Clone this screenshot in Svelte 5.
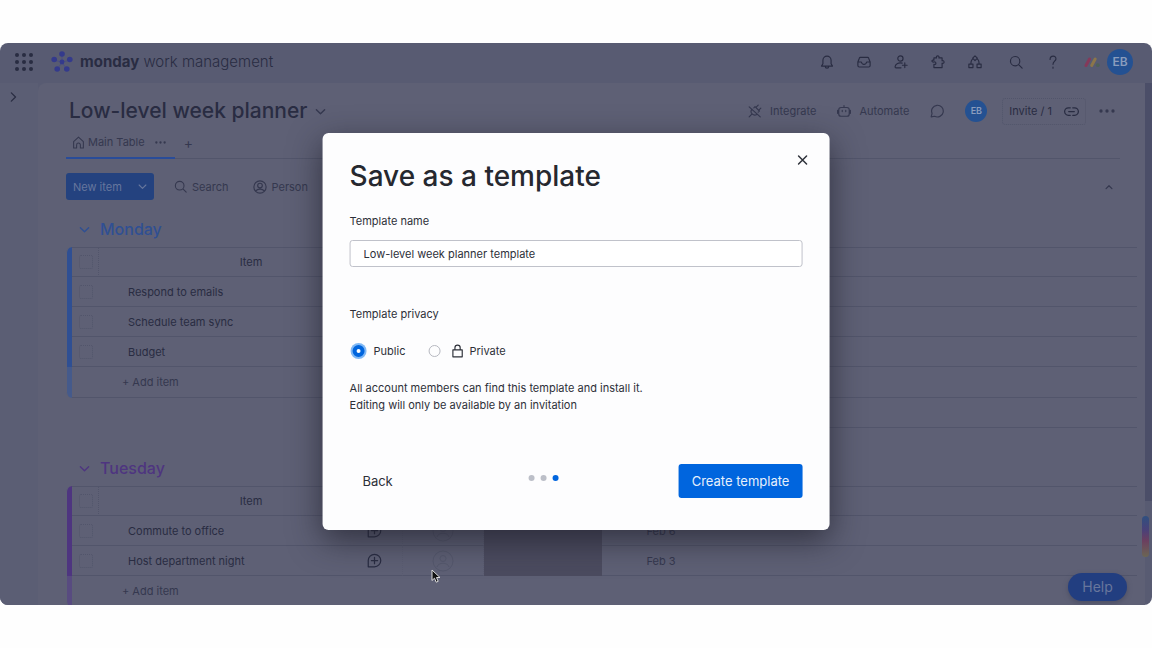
<script lang="ts">
	interface Row {
		name: string;
		date?: string;
	}
	interface Group {
		id: string;
		title: string;
		rows: Row[];
	}

	const groups: Group[] = [
		{
			id: 'monday',
			title: 'Monday',
			rows: [{ name: 'Respond to emails' }, { name: 'Schedule team sync' }, { name: 'Budget' }]
		},
		{
			id: 'tuesday',
			title: 'Tuesday',
			rows: [
				{ name: 'Commute to office', date: 'Feb 6' },
				{ name: 'Host department night', date: 'Feb 3' }
			]
		}
	];

	// 24x24 stroke icons
	const icons: Record<string, string> = {
		bell: 'M12 2a7 7 0 0 0-7 7v6l-2.500 4h19L19 15V9a7 7 0 0 0-7-7zM9 19.500a3 3 0 0 0 6 0',
		inbox:
			'M6 4h12a2 2 0 0 1 2 1.500L22.500 12v6a2.500 2.500 0 0 1-2.500 2.500H4A2.500 2.500 0 0 1 1.500 18v-6L4 5.500A2 2 0 0 1 6 4zM2 12h5.500c.5 2.500 2 4 4.500 4s4-1.500 4.500-4H22',
		invite:
			'M11 1.500a4.500 4.500 0 1 0 0 9 4.500 4.500 0 0 0 0-9zM14 14c-6-1.500-11 1-12 5.500-.3 1.500.3 2.500 1.500 2.500H12M18.500 13.500v8M14.500 17.500h8',
		puzzle:
			'M5 5h4.500C7.500.5 15.500.5 13.500 5H19v5c4.500-2 4.500 6 0 4v7.500H5v-5.500c4.500 2 4.500-5.500 0-4-4.500 1-4.500-4.500 0-3z',
		workflow:
			'M12 1.500l4 4-4 4-4-4zM1.500 15.500h7v6h-7zM15.500 15.500h7v6h-7zM9 6.500c-3 1-4 4-4 9M15 6.500c3 1 4 4 4 9',
		search: 'M10.500 2.500a8 8 0 1 0 0 16 8 8 0 0 0 0-16zM16.500 16.500l6 6',
		help: 'M7 7.500c0-7.500 11-7 10-.5-.6 3.500-5 4-5 9M12 20.500v2',
		chevron: 'M3 8l9 9 9-9',
		chevronUp: 'M5 16l7-7 7 7',
		chevronRight: 'M8 2l10 10L8 22',
		home: 'M3 10.500L12 2l9 8.500V22h-5.500v-5.500a3.500 3.500 0 0 0-7 0V22H3z',
		person:
			'M12 1.500a10.500 10.500 0 1 0 0 21 10.500 10.500 0 0 0 0-21zM12 5.500a4 4 0 1 0 0 8 4 4 0 0 0 0-8zM5 19c2-4.500 12-4.500 14 0',
		plug: 'M7 9c-3 3-2 6 0 8s5 3 8 1M10 6.500l2-2 7.500 7.500-2 2M14.500 5l3-3M19 10l3-3M7 17l-5 5M2 5l19 17',
		robot:
			'M7 6h10a4 4 0 0 1 4 4v7a4 4 0 0 1-4 4H7a4 4 0 0 1-4-4v-7a4 4 0 0 1 4-4zM12 6V2.500M1 11v5M23 11v5M9 11v2M15 11v2',
		chat: 'M2 22l1.500-6A10 10 0 1 1 8 21z',
		chatPlus: 'M2 22V12a10 10 0 1 1 10 10zM12 7v10M7 12h10',
		link: 'M10 6H7a6 6 0 0 0 0 12h3M14 6h3a6 6 0 0 1 0 12h-3M7.500 12h9',
		close: 'M4 4l16 16M20 4L4 20',
		lock: 'M4 10h16v12H4zM7.500 10V6.500a4.500 4.500 0 0 1 9 0V10'
	};

	const barIcons = [
		{ icon: 'bell', label: 'Notifications' },
		{ icon: 'inbox', label: 'Inbox' },
		{ icon: 'invite', label: 'Invite members' },
		{ icon: 'puzzle', label: 'Apps' },
		{ icon: 'workflow', label: 'Workflows' }
	];

	let templateName = $state('Low-level week planner template');
	let privacy = $state('public');
	const steps = 3;
	const currentStep = 2;
</script>

{#snippet icon(name: string, size = 14)}
	<svg
		class="icon"
		class:small={size < 13}
		width={size}
		height={size}
		viewBox="0 0 24 24"
		aria-hidden="true"
	>
		<path d={icons[name]} />
	</svg>
{/snippet}

{#snippet dots(size = 14)}
	<svg class="dots" width={size} height={size} viewBox="0 0 24 24" aria-hidden="true">
		<circle cx="3" cy="12" r="2.500" />
		<circle cx="12" cy="12" r="2.500" />
		<circle cx="21" cy="12" r="2.500" />
	</svg>
{/snippet}

<div class="page">
	<div class="window">
		<header class="topbar">
			<button class="bare apps" aria-label="Switch product">
				<svg width="18" height="18" viewBox="0 0 18 18" aria-hidden="true">
					{#each [2, 9, 16] as cy (cy)}
						{#each [2, 9, 16] as cx (cx)}
							<circle {cx} {cy} r="2" />
						{/each}
					{/each}
				</svg>
			</button>
			<a class="brand" href="/">
				<svg width="22" height="22" viewBox="0 0 22 22" aria-hidden="true">
					<path d="M11 3v8M2 9l9 2M20 9l-9 2M6 19l5-8M16 19l-5-8" />
					<circle cx="11" cy="3" r="2.800" />
					<circle cx="3.200" cy="8.500" r="2.800" />
					<circle cx="18.800" cy="8.500" r="2.800" />
					<circle cx="6.200" cy="18" r="2.800" />
					<circle cx="15.800" cy="18" r="2.800" />
					<circle cx="11" cy="11" r="2.400" />
				</svg>
				<span><b>monday</b> work management</span>
			</a>
			<nav class="bar-icons">
				{#each barIcons as item (item.icon)}
					<button class="bare" aria-label={item.label}>{@render icon(item.icon)}</button>
				{/each}
				<button class="bare wide" aria-label="Search everything">{@render icon('search')}</button>
				<button class="bare" aria-label="Help center">{@render icon('help')}</button>
			</nav>
			<svg class="logo" width="16" height="12" viewBox="0 0 16 12" aria-hidden="true">
				<path class="red" d="M2 9.500l3.500-6.500" />
				<path class="yellow" d="M7.700 9.500l3.500-6.500" />
				<circle cx="13.800" cy="9.200" r="1.900" />
			</svg>
			<span class="avatar large">EB</span>
		</header>

		<div class="body">
			<aside class="rail">
				<button class="bare" aria-label="Open navigation">{@render icon('chevronRight', 10)}</button>
			</aside>

			<main class="board">
				<div class="title-row">
					<h1>Low-level week planner</h1>
					<button class="bare" aria-label="Board details">{@render icon('chevron', 11)}</button>
					<div class="board-actions">
						<button class="bare">{@render icon('plug')} Integrate</button>
						<button class="bare">{@render icon('robot')} Automate</button>
						<button class="bare" aria-label="Board discussion">{@render icon('chat')}</button>
						<span class="avatar">EB</span>
						<button class="bare invite">Invite / 1 {@render icon('link', 15)}</button>
						<button class="bare" aria-label="More options">{@render dots(16)}</button>
					</div>
				</div>

				<div class="tabs">
					<div class="tab">
						<a href="#main">{@render icon('home', 13)} Main Table</a>
						<button class="bare" aria-label="View options">{@render dots(11)}</button>
					</div>
					<button class="bare add-tab" aria-label="Add view">+</button>
				</div>

				<div class="toolbar">
					<button class="new-item">New item {@render icon('chevron', 9)}</button>
					<button class="bare search">{@render icon('search', 13)} Search</button>
					<button class="bare">{@render icon('person')} Person</button>
					<button class="bare collapse" aria-label="Collapse header">{@render icon('chevronUp', 10)}</button>
				</div>

				{#each groups as group (group.id)}
					<section class="group {group.id}">
						<h2>
							<button class="bare" aria-label="Collapse group">{@render icon('chevron', 11)}</button>
							{group.title}
						</h2>
						<table>
							<colgroup>
								<col class="c-bar" />
								<col class="c-check" />
								<col class="c-item" />
								<col class="c-update" />
								<col class="c-person" />
								<col class="c-status" />
								<col class="c-date" />
								<col />
							</colgroup>
							<thead>
								<tr>
									<td class="bar"></td>
									<td class="check"><input type="checkbox" aria-label="Select all" /></td>
									<th colspan="2">Item</th>
									<td></td>
									<td></td>
									<td></td>
									<td></td>
								</tr>
							</thead>
							<tbody>
								{#each group.rows as row (row.name)}
									<tr>
										<td class="bar"></td>
										<td class="check"><input type="checkbox" aria-label={row.name} /></td>
										<td class="name">{row.name}</td>
										<td class="update">{@render icon('chatPlus', 15)}</td>
										<td class="who">
											<svg class="ghost" width="22" height="22" viewBox="0 0 22 22" aria-hidden="true">
												<circle cx="11" cy="11" r="10" />
												<circle cx="11" cy="8.500" r="3" />
												<path d="M5 17c1-5 11-5 12 0" />
											</svg>
										</td>
										<td class="status"></td>
										<td class="date">{row.date ?? ''}</td>
										<td></td>
									</tr>
								{/each}
								<tr class="add">
									<td class="bar"></td>
									<td class="check"></td>
									<td colspan="6">+ Add item</td>
								</tr>
							</tbody>
						</table>
						<div class="summary"></div>
					</section>
				{/each}
			</main>
			<div class="scrollbar"></div>
		</div>

		<div class="side-tab"></div>
		<button class="help">Help</button>

		<div class="modal" role="dialog" aria-labelledby="modal-title">
			<button class="bare close" aria-label="Close">{@render icon('close', 12)}</button>
			<h2 id="modal-title">Save as a template</h2>
			<label class="field" for="template-name">Template name</label>
			<input id="template-name" class="text" type="text" bind:value={templateName} />
			<div class="field privacy" id="privacy-label">Template privacy</div>
			<div class="radios" role="radiogroup" aria-labelledby="privacy-label">
				<label>
					<input type="radio" name="privacy" value="public" bind:group={privacy} />
					Public
				</label>
				<label>
					<input type="radio" name="privacy" value="private" bind:group={privacy} />
					{@render icon('lock', 14)}
					Private
				</label>
			</div>
			<p>
				All account members can find this template and install it.<br />
				Editing will only be available by an invitation
			</p>
			<footer>
				<button class="bare back">Back</button>
				<div class="steps">
					{#each { length: steps } as _, i (i)}
						<span class:active={i === currentStep}></span>
					{/each}
				</div>
				<button class="create">Create template</button>
			</footer>
		</div>

		<svg class="cursor" width="10" height="14" viewBox="0 0 10 14" aria-hidden="true">
			<path d="M1 1v10.500l2.500-2.300 1.700 4 2-.9-1.700-3.800H9z" />
		</svg>
	</div>
</div>

<style>
	:global(body) {
		background: #fefefe;
	}
	.page {
		--ink: #292c42;
		--muted: #35384f;
		--line: #52556b;
		--surface: #5e6075;
		box-sizing: border-box;
		display: flex;
		height: 100vh;
		padding: 43px 0;
		font-family: Inter, 'Liberation Sans', sans-serif;
		font-size: 11px;
		line-height: 16px;
		color: var(--ink);
	}
	.page :where(*) {
		box-sizing: border-box;
	}
	.window {
		position: relative;
		display: flex;
		flex: 1;
		flex-direction: column;
		min-width: 0;
		overflow: hidden;
		border-radius: 8px;
		background: #585b72;
	}
	button,
	input {
		margin: 0;
		font: inherit;
	}
	button {
		cursor: pointer;
	}
	.bare {
		display: inline-flex;
		align-items: center;
		justify-content: center;
		padding: 0;
		border: 0;
		background: none;
		color: inherit;
		white-space: nowrap;
	}
	.icon {
		flex: none;
		fill: none;
		stroke: currentColor;
		stroke-width: 2;
		stroke-linecap: round;
		stroke-linejoin: round;
	}
	.icon.small {
		stroke-width: 3;
	}
	.dots {
		flex: none;
		fill: currentColor;
	}
	h1,
	h2,
	p {
		margin: 0;
		font-weight: 500;
	}

	/* top bar */
	.topbar {
		display: flex;
		flex: none;
		align-items: center;
		height: 40px;
		padding: 0 19px 2px 15px;
	}
	.apps svg {
		fill: var(--ink);
	}
	.brand {
		display: flex;
		align-items: center;
		gap: 7px;
		margin-left: 18px;
		font-size: 15px;
		color: var(--ink);
		text-decoration: none;
		white-space: nowrap;
	}
	.brand span {
		font-weight: 300;
	}
	.brand b {
		font-weight: 700;
	}
	.brand svg {
		fill: #343a8c;
		stroke: #4a4e80;
	}
	.brand circle {
		stroke: none;
	}
	.bar-icons {
		display: flex;
		gap: 23px;
		margin: 0 24px 0 auto;
	}
	.wide {
		margin-left: 4px;
	}
	.logo {
		margin-right: 7px;
		fill: #4e6159;
		stroke-width: 3;
		stroke-linecap: round;
	}
	.red {
		stroke: #85395a;
	}
	.yellow {
		stroke: #8b764a;
	}
	.avatar {
		display: flex;
		align-items: center;
		justify-content: center;
		width: 22px;
		height: 22px;
		border-radius: 50%;
		background: #245192;
		color: #8a9dbd;
		font-size: 9px;
		font-weight: 600;
	}
	.avatar.large {
		width: 26px;
		height: 26px;
		font-size: 12px;
	}

	/* board */
	.body {
		display: flex;
		flex: 1;
		min-height: 0;
	}
	.rail {
		flex: none;
		width: 38px;
		padding: 7px 8px;
		background: #5b5e74;
	}
	.board {
		flex: 1;
		min-width: 0;
		padding: 12px 8px 0 28px;
		border-top-left-radius: 8px;
		background: var(--surface);
	}
	.scrollbar {
		flex: none;
		width: 7px;
		height: 80%;
		background: #4b4e68;
	}
	.title-row {
		display: flex;
		align-items: center;
		gap: 8px;
		height: 32px;
		padding: 0 22px 0 3px;
		color: var(--muted);
	}
	h1 {
		font-size: 21px;
		line-height: 32px;
		color: var(--ink);
		white-space: nowrap;
	}
	.board-actions {
		display: flex;
		align-items: center;
		gap: 21px;
		margin-left: auto;
	}
	.board-actions button {
		gap: 8px;
	}
	.board-actions .invite {
		gap: 12px;
		height: 27px;
		margin: 0 -8px 0 -6px;
		padding: 0 6px;
		border: 1px dotted var(--line);
		border-radius: 3px;
		color: var(--ink);
	}
	.tabs {
		display: flex;
		height: 32px;
		margin-right: 17px;
		border-bottom: 1px solid var(--line);
		color: var(--muted);
	}
	.tab {
		display: flex;
		align-items: center;
		gap: 10px;
		height: 32px;
		padding: 0 9px 0 6px;
		border-bottom: 2px solid #294c99;
	}
	.tab a {
		display: flex;
		align-items: center;
		gap: 3px;
		color: inherit;
		text-decoration: none;
	}
	.add-tab {
		margin-left: 9px;
		font-size: 14px;
	}
	.toolbar {
		display: flex;
		align-items: center;
		gap: 24px;
		height: 27px;
		margin: 14px 23px 0 0;
		color: var(--muted);
	}
	.toolbar .bare {
		gap: 5px;
	}
	.new-item {
		display: flex;
		align-items: center;
		justify-content: space-between;
		width: 88px;
		height: 27px;
		padding: 0 7px;
		border: 0;
		border-radius: 3px;
		background: #24427f;
		color: #66769d;
	}
	.toolbar .search {
		margin-left: -4px;
	}
	.toolbar .collapse {
		margin-left: auto;
	}
	.group {
		padding-top: 16px;
	}
	.monday {
		--accent: #2f4f93;
		--accent-soft: #455a8b;
	}
	.tuesday {
		--accent: #4e3580;
		--accent-soft: #584b80;
	}
	.group h2 {
		display: flex;
		align-items: center;
		gap: 10px;
		padding-left: 13px;
		font-size: 16px;
		line-height: 26px;
		color: var(--accent);
	}
	table {
		width: 100%;
		margin-top: 5px;
		table-layout: fixed;
		border-spacing: 0;
	}
	.c-bar {
		width: 6px;
	}
	.c-check {
		width: 27px;
	}
	.c-item {
		width: 248px;
	}
	.c-update {
		width: 56px;
	}
	.c-person {
		width: 81px;
	}
	.c-status,
	.c-date {
		width: 118px;
	}
	td,
	th {
		height: 30px;
		padding: 0;
		border-bottom: 1px solid var(--line);
		font-weight: 400;
		text-align: center;
	}
	.add td {
		height: 31px;
	}
	thead td,
	thead th {
		border-top: 1px solid var(--line);
	}
	thead .check {
		border-right: 1px dotted var(--line);
	}
	.bar {
		border: 0;
		border-left: 1px solid var(--surface);
		background: var(--accent);
	}
	thead .bar {
		border-top: 0;
		border-top-left-radius: 6px;
	}
	.add .bar {
		border-bottom-left-radius: 6px;
		background: var(--accent-soft);
	}
	.check input {
		display: block;
		width: 14px;
		height: 14px;
		margin: 0 0 0 7px;
		appearance: none;
		border: 1px dotted var(--line);
		border-radius: 2px;
	}
	td.name {
		padding-left: 29px;
		text-align: left;
	}
	.update .icon,
	.ghost {
		display: block;
		margin: 0 auto;
	}
	.update,
	.who {
		border-right: 1px dotted #5a5c71;
	}
	.ghost {
		fill: none;
		stroke: #55586d;
	}
	.status {
		border-color: #4b4b5f;
		background: #4b4b5f;
	}
	.date {
		color: var(--muted);
	}
	.add td[colspan] {
		padding-left: 23px;
		text-align: left;
		color: var(--muted);
	}
	.summary {
		height: 30px;
		margin-left: 336px;
		border-bottom: 1px solid var(--line);
	}
	.tuesday {
		padding-top: 27px;
	}

	/* floating pieces */
	.side-tab {
		position: absolute;
		right: 3px;
		bottom: 48px;
		width: 7px;
		height: 41px;
		border-radius: 4px;
		background: linear-gradient(#2f5080, #4b4178 35%, #6b3f60 60%, #6b6653);
	}
	.help {
		position: absolute;
		right: 25px;
		bottom: 4px;
		width: 59px;
		height: 28px;
		border: 0;
		border-radius: 14px;
		background: #223e80;
		box-shadow: 0 2px 5px #4b4e64;
		color: #68769c;
		font-size: 14px;
	}
	.cursor {
		position: absolute;
		top: 526px;
		left: 431px;
		fill: #111;
		stroke: #ddd;
	}

	/* dialog */
	.modal {
		position: absolute;
		top: 90px;
		left: 50%;
		width: 44%;
		min-width: 420px;
		padding: 24px 27px 32px;
		transform: translateX(-50%);
		border-radius: 6px;
		background: #fdfdfe;
		box-shadow: 0 10px 32px rgb(30 30 42 / 70%);
		color: #2d3039;
	}
	.modal h2 {
		font-size: 28px;
		line-height: 38px;
		color: #26282f;
	}
	.close {
		position: absolute;
		top: 17px;
		right: 17px;
		width: 19px;
		height: 19px;
	}
	.field {
		display: block;
		margin-top: 18px;
	}
	.text {
		display: block;
		width: 100%;
		height: 27px;
		margin-top: 11px;
		padding: 0 13px;
		border: 1px solid #c0c2ca;
		border-radius: 3px;
		background: #fff;
		color: inherit;
	}
	.privacy {
		margin-top: 39px;
	}
	.radios {
		display: flex;
		gap: 23px;
		height: 20px;
		margin-top: 19px;
	}
	.radios label {
		display: flex;
		align-items: center;
		gap: 5px;
	}
	.radios input {
		width: 12px;
		height: 12px;
		margin: 0 5px 0 0;
		appearance: none;
		border: 1px solid #b6b8c0;
		border-radius: 50%;
	}
	.radios input:checked {
		margin: 0 4px 0 3px;
		border: 4px solid #0065de;
		background: #fff;
		box-shadow: 0 0 0 2px #7fb8f5;
	}
	.modal p {
		margin-top: 19px;
		font-weight: 400;
		line-height: 17px;
	}
	footer {
		display: flex;
		align-items: center;
		justify-content: space-between;
		margin-top: 50px;
		font-size: 13px;
	}
	.back {
		width: 56px;
		height: 34px;
	}
	.steps {
		display: flex;
		gap: 6px;
		align-items: center;
		margin: 0 0 6px 2px;
	}
	.steps span {
		width: 6px;
		height: 6px;
		border-radius: 50%;
		background: #bcbfc8;
	}
	.steps .active {
		background: #0065de;
	}
	.create {
		height: 34px;
		padding: 0 13px;
		border: 0;
		border-radius: 3px;
		background: #0065de;
		color: #e6f0fc;
	}
</style>
